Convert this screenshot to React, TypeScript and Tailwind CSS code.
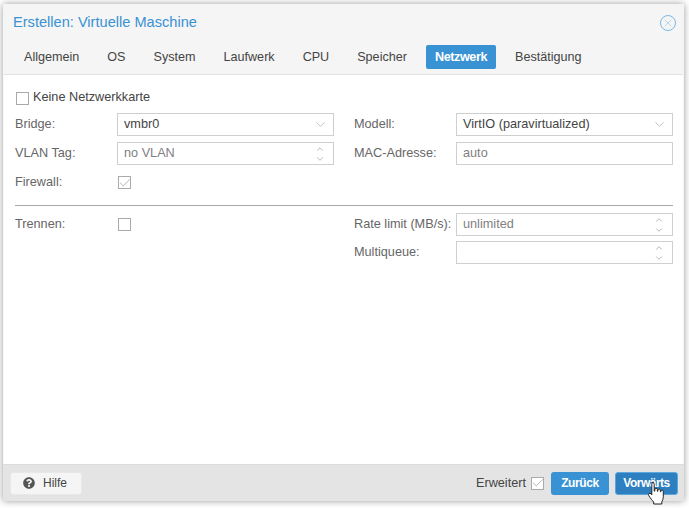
import { ChevronDown, ChevronUp, Check, X } from 'lucide-react'
import { FaQuestionCircle } from 'react-icons/fa'

const tabs = ['Allgemein', 'OS', 'System', 'Laufwerk', 'CPU', 'Speicher', 'Netzwerk', 'Bestätigung']

function CheckBox({ checked }: { checked?: boolean }) {
  return (
    <div className="w-[13px] h-[13px] border border-[#aaaaaa] bg-white flex items-center justify-center shrink-0">
      {checked && <Check className="w-[14px] h-[14px] shrink-0 text-[#8f8f8f]" strokeWidth={1.1} />}
    </div>
  )
}

function Field({ value, kind, dark }: { value?: string; kind?: 'select' | 'spin'; dark?: boolean }) {
  return (
    <div className="w-[217px] h-[23px] border border-[#cfcfcf] bg-white flex items-center pl-[6px] pr-[5px]">
      <span className={`flex-1 text-[12.7px] pt-[1px] ${dark ? 'text-[#444444]' : 'text-[#808080]'}`}>{value}</span>
      {kind === 'select' && <ChevronDown className="w-[15px] h-[15px] text-[#a0a0a0]" strokeWidth={1} />}
      {kind === 'spin' && (
        <div className="flex flex-col items-center">
          <ChevronUp className="w-[16px] h-[10px] text-[#666666]" strokeWidth={1.1} />
          <ChevronDown className="w-[16px] h-[10px] text-[#666666]" strokeWidth={1.1} />
        </div>
      )}
    </div>
  )
}

function Row({ label, children, className }: { label: string; children?: React.ReactNode; className?: string }) {
  return (
    <div className={`flex items-center w-[320px] ${className ?? ''}`}>
      <span className="w-[102px] shrink-0 text-[12.7px] pt-[1px] text-[#666666] whitespace-nowrap">{label}</span>
      {children}
    </div>
  )
}

export default function App() {
  return (
    <div className="w-[689px] h-[508px] bg-white overflow-hidden pt-[4px] pl-[3px] font-['Liberation_Sans',Arial,sans-serif]">
      <div className="relative w-[681px] h-[497px] bg-[#f5f5f5] flex flex-col shadow-[0_0_7px_rgba(0,0,0,0.4)]">
        <div className="h-[38px] mb-[3px] shrink-0 flex items-center justify-between pl-[10px] pr-[8px]">
          <span className="text-[14.6px] text-[#3892d4]">Erstellen: Virtuelle Maschine</span>
          <div className="w-[16px] h-[16px] rounded-full border border-[#7db8e4] flex items-center justify-center">
            <X className="w-[12px] h-[12px] text-[#7db8e4]" strokeWidth={1} />
          </div>
        </div>
        <div className="h-[24px] shrink-0 flex gap-[10px] pl-[12px]">
          {tabs.map((t) => (
            <div
              key={t}
              className={`h-[24px] px-[9px] flex items-center text-[12.6px] rounded-[2px] ${
                t === 'Netzwerk' ? 'bg-[#3892d4] text-white font-bold tracking-[-0.4px] px-[9.5px]' : 'text-[#444444]'
              }`}
            >
              {t}
            </div>
          ))}
        </div>
        <div className="flex-1 mt-[5px] mx-[1px] border-t border-[#e2e2e2] bg-white pt-[16px] pl-[11px]">
          <div className="flex items-center h-[14px] pl-[1px] gap-[4px]">
            <CheckBox />
            <span className="text-[12.7px] text-[#444444]">Keine Netzwerkkarte</span>
          </div>
          <div className="flex gap-[19px] mt-[8px]">
            <div className="flex flex-col">
              <Row label="Bridge:"><Field value="vmbr0" kind="select" dark /></Row>
              <Row label="VLAN Tag:" className="mt-[6px]"><Field value="no VLAN" kind="spin" /></Row>
              <Row label="Firewall:" className="mt-[6px] h-[23px]"><div className="ml-[1px]"><CheckBox checked /></div></Row>
            </div>
            <div className="flex flex-col">
              <Row label="Modell:"><Field value="VirtIO (paravirtualized)" kind="select" dark /></Row>
              <Row label="MAC-Adresse:" className="mt-[6px]"><Field value="auto" /></Row>
            </div>
          </div>
          <div className="w-[658px] border-t border-[#a8a8a8] mt-[11px]" />
          <div className="flex gap-[19px] mt-[7px]">
            <div className="flex flex-col">
              <Row label="Trennen:" className="h-[23px]"><div className="ml-[1px]"><CheckBox /></div></Row>
            </div>
            <div className="flex flex-col">
              <Row label="Rate limit (MB/s):"><Field value="unlimited" kind="spin" /></Row>
              <Row label="Multiqueue:" className="mt-[5px]"><Field kind="spin" /></Row>
            </div>
          </div>
        </div>
        <div className="h-[37px] shrink-0 bg-[#e4e4e4] border-t border-[#dddddd] flex items-center pl-[7px] pr-[6px]">
          <div className="w-[72px] h-[23px] bg-[#f5f5f5] border border-[#e8e8e8] rounded-[3px] flex items-center pl-[12px] gap-[8px]">
            <FaQuestionCircle className="w-[12px] h-[12px] text-[#555555]" />
            <span className="text-[12px] text-[#444444]">Hilfe</span>
          </div>
          <span className="ml-auto text-[12.7px] pt-[2px] text-[#444444]">Erweitert</span>
          <div className="ml-[5px]"><CheckBox checked /></div>
          <div className="ml-[7px] w-[58px] h-[23px] bg-[#3892d4] rounded-[3px] flex items-center justify-center text-[12px] font-bold tracking-[-0.4px] text-white">Zurück</div>
          <div className="ml-[6px] w-[63px] h-[23px] bg-[#2d7fbf] border border-[#5aa6de] rounded-[3px] flex items-center justify-center text-[12px] font-bold tracking-[-0.5px] text-white">Vorwärts</div>
        </div>
        <svg className="absolute left-[643px] top-[477px]" width="21" height="25" viewBox="0 0 21 25">
          <path d="M6.5 1.5c1 0 1.7.7 1.7 1.7v7l.6-.1V8.6c0-1.7 2.6-1.7 2.6 0v1.7h.5V9.2c0-1.6 2.5-1.6 2.5 0v1.6h.5v-.6c0-1.5 2.4-1.5 2.4 0v5.6c0 2-.6 3.5-1.5 5v2.2H7.7v-2c-1.6-1.6-3-3.6-4.9-6.3-1.2-1.8 1-3.2 2.2-1.9l.8 1V3.2c0-1 .7-1.7 1.7-1.7z" fill="#ffffff" stroke="#222222" strokeWidth="1" strokeLinejoin="round" />
        </svg>
      </div>
    </div>
  )
}
